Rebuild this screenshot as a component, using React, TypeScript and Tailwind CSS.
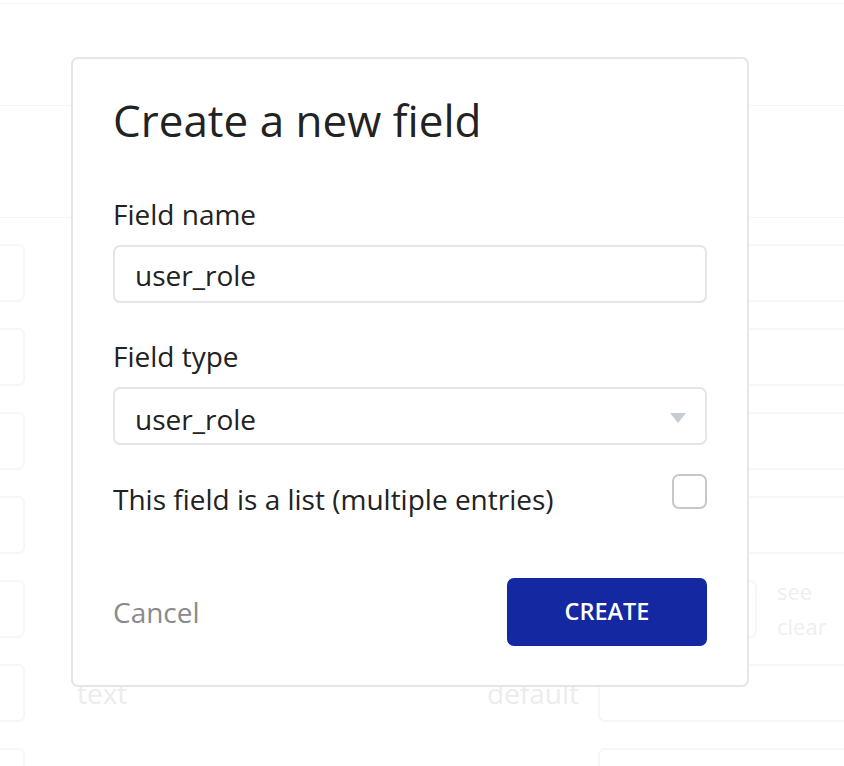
import { useState } from "react";

type Row = { mid?: string; right?: string; side?: "see" };

const rows: Row[] = [{}, {}, {}, {}, { side: "see" }, { mid: "text", right: "default" }, {}];

// Faded page behind the dialog
function Backdrop() {
  return (
    <div className="text-[#ececec]">
      <div className="h-[4px] border-b border-[#f5f5f5]" />
      <div className="h-[102px] border-b border-[#f5f5f5]" />
      <div className="h-[112px] border-b border-[#f5f5f5]" />
      <div className="flex flex-col gap-[26px] pt-[26px]">
        {rows.map((r, i) => (
          <div key={i} className="flex h-[58px] items-stretch">
            <div className="w-[25px] shrink-0 rounded-r-[7px] border-2 border-l-0 border-[#f6f6f6]" />
            <div className="flex w-[573px] shrink-0 items-center pl-[52px] text-[28px]">
              <span className="w-[410px]">{r.mid}</span>
              <span>{r.right}</span>
            </div>
            {r.side === "see" ? (
              <div className="flex flex-1 items-center">
                <div className="h-full w-[159px] rounded-r-[7px] border-2 border-l-0 border-[#f6f6f6]" />
                <div className="pl-[20px] text-[22px] leading-[35px] text-[#efefef]">
                  see
                  <br />
                  clear
                </div>
              </div>
            ) : (
              <div className="-mr-[6px] flex-1 rounded-l-[7px] border-2 border-r-0 border-[#f6f6f6]" />
            )}
          </div>
        ))}
      </div>
    </div>
  );
}

function NewFieldDialog() {
  const [name, setName] = useState("user_role");
  const [type, setType] = useState("user_role");
  const [isList, setIsList] = useState(false);

  return (
    <div className="absolute left-[71px] top-[57px] w-[678px] rounded-[7px] border-2 border-[#e5e5e5] bg-white px-10 pb-[39px] pt-[35px] text-[#222]">
      <h1 className="text-[44px] leading-[52px] font-normal">Create a new field</h1>

      <label className="mt-[50px] block text-[28px] leading-[36px]">Field name</label>
      <input
        value={name}
        onChange={(e) => setName(e.target.value)}
        className="mt-[12.5px] block h-[58px] w-full rounded-[7px] border-2 border-[#e5e5e5] px-5 pt-[2px] text-[28px] text-[#222] outline-none"
      />

      <label className="mt-[35.5px] block text-[28px] leading-[36px]">Field type</label>
      <div className="relative mt-[12.5px]">
        <select
          value={type}
          onChange={(e) => setType(e.target.value)}
          className="block h-[58px] w-full appearance-none rounded-[7px] border-2 border-[#e5e5e5] bg-white px-5 pt-[7px] text-[28px] text-[#222] outline-none"
        >
          <option value="user_role">user_role</option>
          <option value="text">text</option>
        </select>
        <svg width="16" height="10" viewBox="0 0 16 10" className="pointer-events-none absolute right-[21px] top-[26px]">
          <path d="M0 0h16L8 10z" fill="#c6ccd3" />
        </svg>
      </div>

      <div className="mt-[29px] flex items-start justify-between">
        <span className="mt-[7px] text-[28px] leading-[36px]">This field is a list (multiple entries)</span>
        <button
          onClick={() => setIsList(!isList)}
          className={`h-[35px] w-[35px] rounded-[7px] border-2 ${isList ? "border-[#1428a0] bg-[#1428a0]" : "border-[#c8c8c8] bg-white"}`}
        />
      </div>

      <div className="mt-[61px] flex items-center justify-between">
        <button className="text-[28px] leading-[36px] text-[#8a8a8a]">Cancel</button>
        <button className="h-[68px] w-[200px] rounded-[7px] bg-[#1428a2] text-[23.5px] font-semibold text-white">CREATE</button>
      </div>
    </div>
  );
}

export default function App() {
  return (
    <div className="relative h-[766px] overflow-hidden bg-white font-['Open_Sans',sans-serif]">
      <Backdrop />
      <NewFieldDialog />
    </div>
  );
}
